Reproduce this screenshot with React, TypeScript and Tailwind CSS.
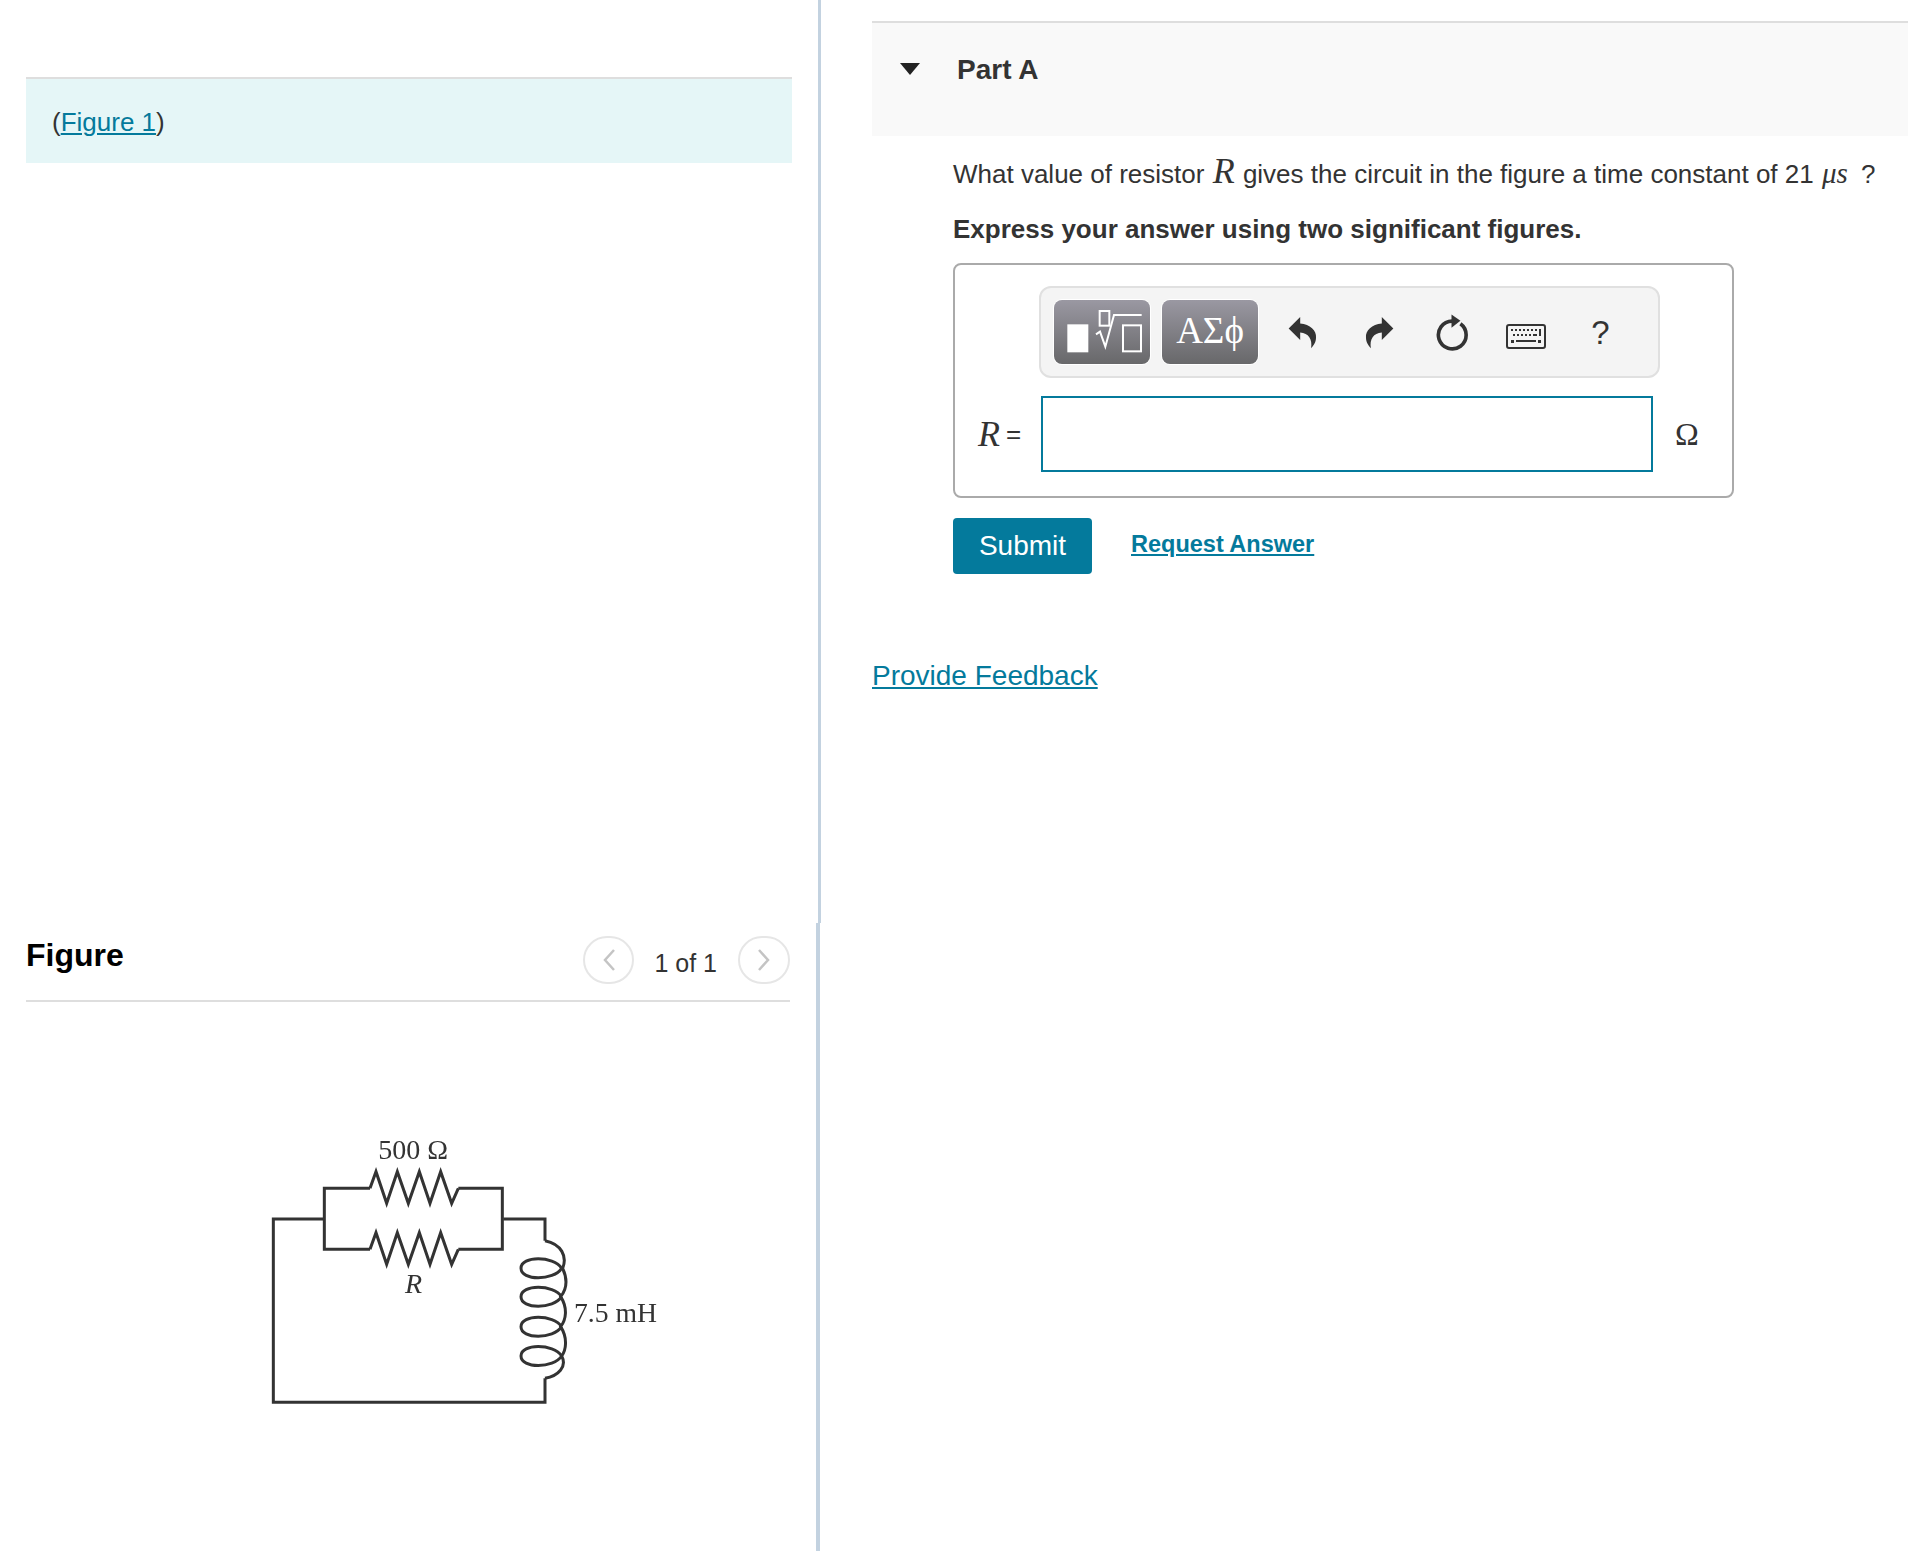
import React from 'react';

const sans = "font-['Liberation_Sans',Arial,sans-serif]";

const resistor = (y: number) =>
  `M360 ${y} L378 ${y - 50} L410 ${y + 45} L442 ${y - 50} L475 ${y + 45} L508 ${y - 50} L540 ${y + 45} L572 ${y - 50} L605 ${y + 45} L625 ${y}`;

// coil = teardrop loops plus the bulge on the right joining them
const loops = [445, 530, 620, 708];
const coilLoop = (y: number) =>
  `M935 ${y} C910 ${y + 38} 813 ${y + 38} 813 ${y} C813 ${y - 38} 910 ${y - 38} 935 ${y}`;
const coilSide =
  'M885 362 C935 372 952 410 938 445 C954 480 948 510 932 530 C954 565 948 600 932 620 C954 655 948 690 935 708 C952 740 925 768 885 775';

const Circuit = () => (
  <svg viewBox="0 0 1350 900" className="w-[450px] h-[300px] blur-[0.5px]">
    <g fill="none" stroke="#333" strokeWidth="9">
      <path d="M220 297 H70 V847 H885 V775" />
      <path d="M760 297 H885 V362" />
      <path d="M360 205 H223 V388 H360" />
      <path d="M625 205 H757 V388 H625" />
      <path d={resistor(205)} />
      <path d={resistor(388)} />
      <path d={coilSide} />
      {loops.map((y) => (
        <path key={y} d={coilLoop(y)} />
      ))}
    </g>
    <g fill="#333" fontFamily="'Liberation Serif', serif" fontSize="84">
      <text x="385" y="118">500 Ω</text>
      <text x="465" y="520" fontStyle="italic">R</text>
      <text x="972" y="605" fontSize="83">7.5 mH</text>
    </g>
  </svg>
);

const MathButton = ({ children }: { children: React.ReactNode }) => (
  <div className="flex h-[64px] w-[96px] items-center justify-center rounded-[8px] bg-gradient-to-b from-[#9a98a2] to-[#68686a] shadow-[0_0_0_1px_#fff]">
    {children}
  </div>
);

const Undo = ({ flip }: { flip?: boolean }) => (
  <svg viewBox="50 58 94 104" className={`h-[35px] w-[31px] ${flip ? '-scale-x-100' : ''}`}>
    <path fill="#333" d="M55 98 L90 63 V83 C120 85 140 105 138 125 C138 140 130 150 123 158 C128 130 115 112 90 110 V133 Z" />
  </svg>
);

const Keyboard = () => (
  <svg viewBox="0 0 40 25" className="h-[25px] w-[40px]">
    <rect x="1" y="1" width="38" height="23" rx="2" fill="none" stroke="#333" strokeWidth="2" />
    <g fill="#333">
      <rect x="5" y="5" width="2" height="2" />
      <rect x="9" y="5" width="2" height="2" />
      <rect x="13" y="5" width="2" height="2" />
      <rect x="17" y="5" width="2" height="2" />
      <rect x="21" y="5" width="2" height="2" />
      <rect x="25" y="5" width="2" height="2" />
      <rect x="29" y="5" width="2" height="2" />
      <rect x="33" y="5" width="2" height="7" />
      <rect x="7" y="10" width="2" height="2" />
      <rect x="11" y="10" width="2" height="2" />
      <rect x="15" y="10" width="2" height="2" />
      <rect x="19" y="10" width="2" height="2" />
      <rect x="23" y="10" width="2" height="2" />
      <rect x="27" y="10" width="4" height="2" />
      <rect x="5" y="16" width="3" height="3" />
      <rect x="10" y="16" width="20" height="2" />
      <rect x="32" y="16" width="3" height="3" />
    </g>
  </svg>
);

const Reload = () => (
  <svg viewBox="490 50 112 120" className="h-[40px] w-[37px]">
    <path d="M545 77 A42 42 0 1 0 570 85" fill="none" stroke="#333" strokeWidth="11" />
    <path d="M543 57 L570 76 L543 97 Z" fill="#333" />
  </svg>
);

export default function App() {
  return (
    <div className={`flex h-[1551px] w-full overflow-hidden bg-white text-[#333] ${sans}`}>
      <div className="flex w-[821px] shrink-0 flex-col">
        <div className="h-[923px] border-r-[3px] border-[#c3d2e0] pt-[77px]">
          <div className="ml-[26px] h-[86px] w-[766px] border-t-2 border-[#dedede] bg-[#e5f6f7] pl-[26px] pt-[27px] text-[26px] leading-[32px]">
            (<a className="text-[#047a9c] underline">Figure 1</a>)
          </div>
        </div>
        <div className="flex-1 w-[820px] border-r-4 border-[#c3d2e0]">
          <div className="ml-[26px] flex h-[79px] w-[764px] items-start justify-between border-b-2 border-[#dedede] pt-[13px]">
            <h2 className="mt-[3px] text-[32px] font-bold leading-[32px] text-black">Figure</h2>
            <div className="flex items-center">
              <div className="flex h-[48px] w-[51px] items-center justify-center rounded-full border-2 border-[#e6e6e6]">
                <svg viewBox="0 0 14 24" className="h-[24px] w-[14px]"><path d="M12 2 L3 12 L12 22" fill="none" stroke="#c4c4c4" strokeWidth="2.5" /></svg>
              </div>
              <span className="ml-[20px] mr-[21px] mt-[6px] text-[25px] leading-[32px]">1 of 1</span>
              <div className="flex h-[48px] w-[52px] items-center justify-center rounded-full border-2 border-[#e6e6e6]">
                <svg viewBox="0 0 14 24" className="h-[24px] w-[14px]"><path d="M2 2 L11 12 L2 22" fill="none" stroke="#c4c4c4" strokeWidth="2.5" /></svg>
              </div>
            </div>
          </div>
          <div className="ml-[250px] mt-[118px]">
            <Circuit />
          </div>
        </div>
      </div>

      <div className="min-w-0 flex-1 pl-[51px] pt-[21px]">
        <div className="flex h-[115px] items-start border-t-2 border-[#dedede] bg-[#f9f9f9] pl-[28px] pt-[29px]">
          <svg viewBox="0 0 20 12" className="mt-[11px] h-[12px] w-[20px]"><path d="M0 0 H20 L10 12 Z" fill="#222" /></svg>
          <h3 className="ml-[37px] text-[28px] font-bold leading-[36px]">Part A</h3>
        </div>
        <div className="pl-[81px]">
          <p className="mt-[17px] whitespace-nowrap text-[26px] leading-[36px]">
            What value of resistor <i className="ml-[1px] mr-[1px] font-['Liberation_Serif',serif] text-[36px] leading-[36px]">R</i> gives the circuit in the figure a time constant of 21 <i className="ml-[1px] mr-[6px] font-['Liberation_Serif',serif] text-[29px] leading-[36px]">μs</i> ?
          </p>
          <p className="mt-[19px] text-[26px] font-bold leading-[36px]">Express your answer using two significant figures.</p>
          <div className="mt-[16px] h-[235px] w-[781px] rounded-[8px] border-2 border-[#aaaaaa] pl-[84px] pt-[21px]">
            <div className="flex h-[92px] w-[621px] items-center rounded-[12px] border-2 border-[#e0e0e0] bg-[#f4f4f4] pl-[13px]">
              <MathButton>
                <svg viewBox="42 45 288 192" className="h-[64px] w-[96px]">
                  <rect x="82" y="118" width="63" height="84" fill="#fff" />
                  <rect x="179" y="78" width="29" height="44" fill="none" stroke="#fff" strokeWidth="6" />
                  <path d="M168 148 L180 140 L196 185 L222 90 H305" fill="none" stroke="#fff" strokeWidth="6" />
                  <rect x="249" y="121" width="54" height="78" fill="none" stroke="#fff" strokeWidth="6" />
                </svg>
              </MathButton>
              <div className="ml-[12px]">
                <MathButton>
                  <span className="-mt-[3px] font-['Liberation_Serif',serif] text-[37px] leading-none text-white">ΑΣϕ</span>
                </MathButton>
              </div>
              <div className="ml-[7px] flex w-[75px] justify-center"><Undo /></div>
              <div className="flex w-[78px] justify-center"><Undo flip /></div>
              <div className="flex w-[72px] justify-center pr-[4px]"><Reload /></div>
              <div className="flex w-[74px] justify-center pr-[2px] pt-[8px]"><Keyboard /></div>
              <div className="flex w-[75px] justify-center pr-[2px] text-[33px] leading-none">?</div>
            </div>
            <div className="mt-[18px] flex items-center">
              <div className="-ml-[61px] flex w-[63px] items-center text-[26px]">
                <i className="font-['Liberation_Serif',serif] text-[36px] leading-none">R</i>
                <span className="ml-[6px]">=</span>
              </div>
              <div className="h-[76px] w-[612px] border-2 border-[#047a9c] bg-white" />
              <span className="ml-[22px] font-['Liberation_Serif',serif] text-[32px] leading-none">Ω</span>
            </div>
          </div>
          <div className="mt-[20px] flex items-start">
            <button className="h-[56px] w-[139px] rounded-[4px] bg-[#047a9c] text-[28px] text-white">Submit</button>
            <a className="ml-[39px] mt-[10px] text-[23.5px] font-bold leading-[32px] text-[#047a9c] underline">Request Answer</a>
          </div>
        </div>
        <a className="mt-[84px] inline-block text-[28px] leading-[36px] text-[#047a9c] underline">Provide Feedback</a>
      </div>
    </div>
  );
}
